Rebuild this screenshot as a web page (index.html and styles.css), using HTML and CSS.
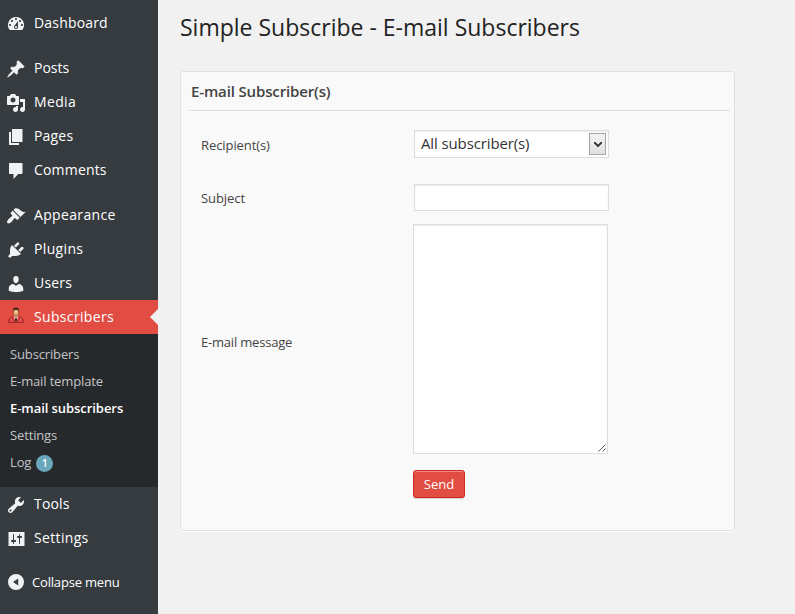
FILE: index.html
```
<!DOCTYPE html>
<html lang="en">
<head>
<meta charset="utf-8">
<title>Simple Subscribe - E-mail Subscribers</title>
<link rel="stylesheet" href="styles.css">
</head>
<body>
<div class="layout">
<nav class="sidebar">
  <ul class="menu">
    <li class="item"><svg class="icon" viewBox="0 0 20 20"><path d="M3.76 16h12.48A7.998 7.998 0 0 0 10 3a7.998 7.998 0 0 0-6.24 13zM10 4c.55 0 1 .45 1 1s-.45 1-1 1-1-.45-1-1 .45-1 1-1zM6 6c.55 0 1 .45 1 1s-.45 1-1 1-1-.45-1-1 .45-1 1-1zm8 0c.55 0 1 .45 1 1s-.45 1-1 1-1-.45-1-1 .45-1 1-1zm-5.37 5.55L12 7v6c0 1.1-.9 2-2 2s-2-.9-2-2c0-.57.24-1.08.63-1.45zM4 10c.55 0 1 .45 1 1s-.45 1-1 1-1-.45-1-1 .45-1 1-1zm12 0c.55 0 1 .45 1 1s-.45 1-1 1-1-.45-1-1 .45-1 1-1zm-5 3c0-.55-.45-1-1-1s-1 .45-1 1 .45 1 1 1 1-.45 1-1z"/></svg><span class="label">Dashboard</span></li>
    <li class="separator"></li>
    <li class="item"><svg class="icon" viewBox="0 0 20 20"><path d="M10.44 3.02l1.82-1.82 6.36 6.35-1.83 1.82c-1.05-.68-2.48-.57-3.41.36l-.75.75c-.92.93-1.04 2.35-.35 3.41l-1.83 1.82-2.41-2.41-2.8 2.79c-.42.42-3.38 2.71-3.8 2.29s1.86-3.39 2.28-3.81l2.79-2.79L4.1 9.36l1.83-1.82c1.05.69 2.48.57 3.4-.36l.75-.75c.93-.92 1.05-2.35.36-3.41z"/></svg><span class="label posts">Posts</span></li>
    <li class="item"><svg class="icon" viewBox="0 0 20 20"><path d="M13 11V4c0-.55-.45-1-1-1h-1.670L9 1H5L3.670 3H2c-.55 0-1 .45-1 1v7c0 .55.45 1 1 1h10c.55 0 1-.45 1-1zM7 4.500c1.380 0 2.500 1.120 2.500 2.500S8.380 9.500 7 9.500 4.500 8.380 4.500 7 5.620 4.500 7 4.500zM14 6h5v10.500c0 1.380-1.120 2.500-2.500 2.500S14 17.880 14 16.500s1.120-2.500 2.500-2.500c.17 0 .34.02.5.05V9h-3V6zm-4 8.050V13h2v3.500c0 1.380-1.120 2.500-2.500 2.500S7 17.880 7 16.500 8.120 14 9.500 14c.17 0 .34.02.5.05z"/></svg><span class="label wide">Media</span></li>
    <li class="item"><svg class="icon" viewBox="0 0 20 20"><path d="M6 15V2h10.500v13H6zm-1 1h8v2H3V5h2v11z"/></svg><span class="label">Pages</span></li>
    <li class="item"><svg class="icon" viewBox="0 0 20 20"><path d="M4 2h11.500c.6 0 1 .4 1 1v9c0 .6-.4 1-1 1h-3.300L7.500 18v-5H4c-.6 0-1-.4-1-1V3c0-.6.4-1 1-1z"/></svg><span class="label">Comments</span></li>
    <li class="separator"></li>
    <li class="item"><svg class="icon" viewBox="0 0 20 20"><path d="M14.48 11.06L7.41 3.99l1.5-1.5c.5-.56 2.3-.47 3.51.32 1.21.8 1.43 1.28 2.91 2.1 1.18.64 2.45 1.26 4.45.85zm-.71.71L6.7 4.7 4.93 6.47c-.39.39-.39 1.02 0 1.41l1.06 1.06c.39.39.39 1.03 0 1.42-.6.6-1.43 1.11-2.21 1.69-.35.26-.7.53-1.01.84C1.43 14.23.4 16.08 1.4 17.07c.99 1 2.84-.03 4.18-1.36.31-.31.58-.66.85-1.02.57-.78 1.08-1.61 1.69-2.21.39-.39 1.02-.39 1.41 0l1.06 1.06c.39.39 1.02.39 1.41 0z"/></svg><span class="label wide">Appearance</span></li>
    <li class="item"><svg class="icon" viewBox="0 0 20 20"><path d="M13.11 4.36L9.87 7.6 8 5.73l3.24-3.24c.35-.34 1.05-.2 1.56.32.52.51.66 1.21.31 1.55zm-8 1.77l.91-1.12 9.01 9.01-1.19.84c-.71.71-2.63 1.16-3.82 1.16H6.14L4.9 17.26c-.59.59-1.54.59-2.12 0-.59-.58-.59-1.53 0-2.12l1.24-1.24v-3.88c0-1.13.4-3.19 1.09-3.89zm7.26 3.97l3.24-3.24c.34-.35 1.04-.21 1.55.31.52.51.66 1.21.31 1.55l-3.24 3.25z"/></svg><span class="label wide">Plugins</span></li>
    <li class="item"><svg class="icon" viewBox="0 0 20 20"><path d="M10 9.25c-2.27 0-2.73-3.44-2.73-3.44C7 4.02 7.82 2 9.97 2c2.16 0 2.98 2.02 2.71 3.81 0 0-.41 3.44-2.68 3.44zm0 2.57L12.72 10c2.39 0 4.52 2.33 4.52 4.53v2.49s-3.65 1.13-7.24 1.13c-3.65 0-7.24-1.13-7.24-1.13v-2.49c0-2.25 1.94-4.48 4.47-4.48z"/></svg><span class="label">Users</span></li>
    <li class="item current"><svg class="avatar" viewBox="0 0 16 16"><path d="M.6 15.4c0-3.6.9-4.6 4.4-5.7h6c3.500 1.100 4.400 2.100 4.400 5.700z" fill="#d8393a" stroke="#8f2020" stroke-width=".8"/><path d="M3.300 11.500v3.300M12.700 11.500v3.300" stroke="#f08a80" stroke-width=".8"/><path d="M5.500 9.500h5L8 15z" fill="#f5e8dc"/><path d="M7.300 10.500h1.400l.5 3L8 15l-1.200-1.500z" fill="#4a3030"/><path d="M6.500 7h3v3L8 11 6.500 10z" fill="#d99a68"/><ellipse cx="8" cy="5" rx="2.700" ry="3.500" fill="#efb988" stroke="#6b3d20" stroke-width=".6"/><path d="M5 5C4.500 1.500 6 .4 8 .4s3.500 1.100 3 4.600C10.500 3 9.500 3 8 3S5.500 3 5 5z" fill="#4b2c18"/></svg><span class="label wide">Subscribers</span></li>
  </ul>
  <ul class="submenu">
    <li>Subscribers</li>
    <li>E-mail template</li>
    <li class="active">E-mail subscribers</li>
    <li>Settings</li>
    <li>Log<span class="badge">1</span></li>
  </ul>
  <ul class="menu-end">
    <li class="item"><svg class="icon" viewBox="0 0 20 20"><path d="M16.68 9.77c-1.34 1.34-3.3 1.67-4.95.99l-5.41 6.52c-.99.99-2.59.99-3.58 0s-.99-2.59 0-3.57l6.52-5.42c-.68-1.65-.35-3.61.99-4.95 1.28-1.28 3.12-1.62 4.72-1.06l-2.89 2.89 2.82 2.82 2.86-2.87c.53 1.58.18 3.39-1.08 4.65zM3.81 16.21c.4.39 1.04.39 1.43 0 .4-.4.4-1.04 0-1.43-.39-.4-1.03-.4-1.43 0-.39.39-.39 1.03 0 1.43z"/></svg><span class="label">Tools</span></li>
    <li class="item"><svg class="icon" viewBox="0 0 20 20"><path d="M18.500 17V3h-16v14h16zM8 11h1c.55 0 1 .45 1 1s-.45 1-1 1H8v1.500c0 .28-.22.5-.5.5s-.5-.22-.5-.5V13H6c-.55 0-1-.45-1-1s.45-1 1-1h1V5.500c0-.28.22-.5.5-.5s.5.22.5.5V11zm5-2h-1c-.55 0-1-.45-1-1s.45-1 1-1h1V5.500c0-.28.22-.5.5-.5s.5.22.5.5V7h1c.55 0 1 .45 1 1s-.45 1-1 1h-1v5.500c0 .28-.22.5-.5.5s-.5-.22-.5-.5V9z"/></svg><span class="label wide">Settings</span></li>
    <li class="item collapse"><svg class="icon" viewBox="0 0 20 20"><path fill-rule="evenodd" d="M10 2a8 8 0 1 0 0 16 8 8 0 0 0 0-16zm2.200 4.500v7L7 10z"/></svg><span>Collapse menu</span></li>
  </ul>
</nav>
<main class="content">
  <h1>Simple Subscribe - E-mail Subscribers</h1>
  <section class="card">
    <h2>E-mail Subscriber(s)</h2>
    <form>
      <div class="row recipients"><label>Recipient(s)</label>
        <div class="field select"><span>All subscriber(s)</span><span class="arrow"><svg viewBox="0 0 8 7"><path d="M0 1h2v1h1v1h2V2h1V1h2v2H7v1H6v1H5v1H3V5H2V4H1V3H0z"/></svg></span></div></div>
      <div class="row subject"><label>Subject</label><div class="field input"></div></div>
      <div class="row message"><label>E-mail message</label>
        <div class="field textarea"><svg class="grip" viewBox="0 0 8 8"><path d="M.5 7.500l7-7M4.500 7.500l3-3"/></svg></div></div>
      <button type="button">Send</button>
    </form>
  </section>
</main>
</div>
</body>
</html>
```
FILE: styles.css
```
* { box-sizing: border-box; }
body { margin: 0; background: #f1f1f1; color: #444; font: 13px/18px "Open Sans", sans-serif; }
ul { list-style: none; margin: 0; padding: 0; }
.layout { display: flex; height: 614px; overflow: hidden; }
.sidebar { width: 158px; flex: none; background: #363b3f; color: #fff; }
.menu { padding-top: 6px; }
.item { display: flex; align-items: center; height: 34px; padding-left: 6px; font-size: 14px; }
.icon { width: 20px; height: 20px; margin: 2px 8px 0 0; fill: #f1f2f3; }
.label { letter-spacing: .18px; }
.label.wide { letter-spacing: .34px; }
.label.posts { letter-spacing: 0; }
.separator { height: 11px; }
.current { background: #e14d43; position: relative; }
.current::after { content: ""; position: absolute; right: 0; top: 9px; border: 8px solid transparent; border-left: 0; border-right-color: #f1f1f1; }
.avatar { width: 16px; height: 16px; margin: 0 10px 4px 2px; }
.submenu { height: 153px; padding: 6px 10px; background: #26292c; color: #c3c4c5; letter-spacing: -.14px; }
.submenu li { display: flex; align-items: center; height: 27px; }
.submenu .active { color: #fff; font-weight: 600; letter-spacing: -.06px; }
.badge { width: 17px; height: 17px; margin: 4px 0 0 5px; border-radius: 50%; background: #69a8bb; color: #fff; font-size: 10px; line-height: 17px; font-weight: 600; text-align: center; }
.collapse { margin-top: 10px; font-size: 13px; letter-spacing: -.18px; }
.collapse .icon { margin: 0 6px 0 0; }
.content { flex: 1; padding: 12px 60px 0 22px; }
h1 { margin: 0; font-size: 23px; line-height: 30px; font-weight: 400; color: #222; white-space: nowrap; }
.card { width: 555px; height: 460px; margin-top: 29px; padding: 0 4px 0 8px; border: 1px solid #e1e1e1; border-radius: 3px; background: #f9f9f9; box-shadow: 0 1px 0 #fff; }
h2 { height: 39px; margin: 0; padding-left: 2px; border-bottom: 1px solid #dfdfdf; font-size: 15px; line-height: 39px; font-weight: 600; letter-spacing: -.14px; }
form { padding: 19px 0 0 12px; }
.row { display: flex; align-items: center; }
.row label { width: 213px; letter-spacing: -.08px; }
.field { width: 195px; border: 1px solid #ddd; background: #fff; box-shadow: inset 0 1px 2px rgba(0,0,0,.07); }
.recipients { height: 28px; }
.recipients label { padding-top: 2px; }
.select { height: 28px; display: flex; align-items: center; justify-content: space-between; padding: 0 2px 0 6px; font-size: 15px; color: #333; letter-spacing: -.12px; }
.select > span:first-child { padding-bottom: 2px; }
.arrow { display: flex; align-items: center; justify-content: center; width: 17px; height: 22px; border: 1px solid #a5a5a5; background: linear-gradient(#f2f2f2, #e0e0e0); }
.arrow svg { width: 8px; height: 7px; fill: #444; }
.subject { margin-top: 26px; }
.input { height: 27px; }
.message { margin-top: 13px; }
.message label { width: 212px; padding-top: 6px; letter-spacing: -.2px; }
.textarea { height: 230px; display: flex; align-items: flex-end; justify-content: flex-end; padding: 1px; }
.grip { width: 8px; height: 8px; stroke: #555; fill: none; }
button { display: block; width: 52px; height: 28px; margin: 16px 0 0 212px; padding: 0; border: 1px solid #d02a21; border-radius: 3px; background: #e14d43; color: #fff; font: 13px/26px "Open Sans", sans-serif; box-shadow: inset 0 1px 0 #ec8a85, 0 1px 0 rgba(0,0,0,.15); }
```
